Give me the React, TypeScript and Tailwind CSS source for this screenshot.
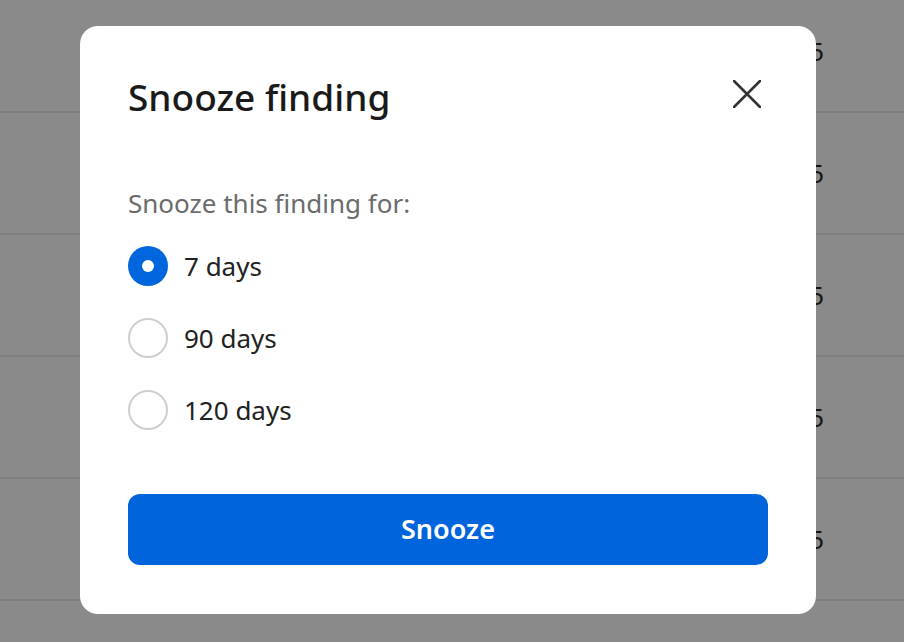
import { useState } from "react"

const rows = [0, 1, 2, 3, 4]
const options = ["7 days", "90 days", "120 days"]

function CloseIcon() {
  return (
    <svg width="28" height="28" viewBox="0 0 28 28" fill="none">
      <path d="M1 1 L27 27 M27 1 L1 27" stroke="#333" strokeWidth="2.6" strokeLinecap="round" />
    </svg>
  )
}

function Radio({ checked }: { checked: boolean }) {
  if (checked) {
    return (
      <span className="flex h-10 w-10 shrink-0 items-center justify-center rounded-full bg-[#0066dd]">
        <span className="h-3 w-3 rounded-full bg-white" />
      </span>
    )
  }
  return <span className="h-10 w-10 shrink-0 rounded-full border-2 border-[#cfcfcf] bg-white" />
}

export default function App() {
  const [choice, setChoice] = useState("7 days")

  return (
    <div className="relative h-[642px] w-[904px] overflow-hidden bg-[#8a8a8a] font-['Noto_Sans',sans-serif]">
      {/* page behind the overlay */}
      <div className="-mt-[9px] flex flex-col">
        {rows.map((r) => (
          <div
            key={r}
            className="flex h-[122px] items-center justify-end border-b-2 border-[#7e7e7e] pr-[80px] text-[26px] text-[#151515]"
          >
            5
          </div>
        ))}
      </div>

      <div className="absolute left-[80px] top-[26px] flex h-[588px] w-[736px] flex-col rounded-[18px] bg-white px-12 pt-[49px]">
        <div className="flex items-center justify-between">
          <h1 className="text-[37px] leading-[44px] font-medium text-[#1a1a1a]">Snooze finding</h1>
          <button className="mr-[7px] -mt-[6px]">
            <CloseIcon />
          </button>
        </div>

        <p className="mt-[67px] text-[26px] leading-[34px] text-[#6b6b6b]">Snooze this finding for:</p>

        <div className="mt-[26px] flex flex-col gap-8">
          {options.map((o) => (
            <label key={o} className="flex cursor-pointer items-center gap-4" onClick={() => setChoice(o)}>
              <Radio checked={choice === o} />
              <span className="text-[26px] leading-[40px] text-[#222]">{o}</span>
            </label>
          ))}
        </div>

        <button className="mt-[64px] h-[71px] w-full rounded-[12px] bg-[#0064dc] text-[27px] font-semibold text-white">
          Snooze
        </button>
      </div>
    </div>
  )
}
